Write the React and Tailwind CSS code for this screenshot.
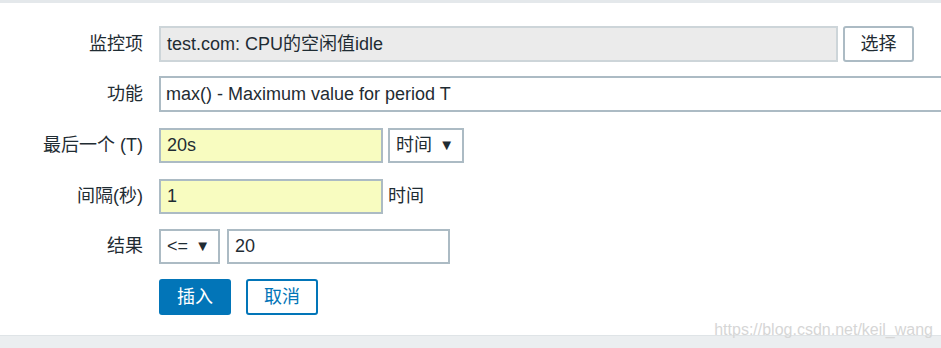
function Row({ label, className = "", children }) {
  return (
    <div className={`flex items-center ${className}`}>
      <div className="w-[143px] shrink-0 text-right text-[18px] text-[#1f2c33]">{label}</div>
      <div className="ml-[16px] flex items-center flex-1 min-w-0">{children}</div>
    </div>
  );
}

function Select({ value, className = "" }) {
  return (
    <div
      className={`flex items-center justify-between border-2 border-[#acbbc4] bg-white pl-[6px] pr-[8px] text-[18px] text-[#1f2c33] ${className}`}
    >
      <span>{value}</span>
      <span className="text-[15px]">▼</span>
    </div>
  );
}

export default function App() {
  return (
    <div
      className="relative w-[941px] h-[348px] overflow-hidden bg-white text-[#1f2c33]"
      style={{ fontFamily: '"Liberation Sans", Arial, "Noto Sans CJK SC", sans-serif' }}
    >
      <div className="h-[3px] bg-[#e4e8eb]" />

      <div className="pt-[23px]">
        <Row label="监控项">
          <div className="flex items-center w-[679px] h-[36px] border-2 border-[#cdd5d9] bg-[#ebebeb] px-[6px] text-[18px]">
            test.com: CPU的空闲值idle
          </div>
          <button className="ml-[5px] w-[71px] h-[36px] rounded-[3px] border-2 border-[#acbbc4] bg-white text-[18px]">
            选择
          </button>
        </Row>

        <Row label="功能" className="mt-[14px]">
          <div className="flex items-center w-[820px] shrink-0 h-[36px] border-2 border-[#acbbc4] bg-white px-[5px] text-[18px]">
            max() - Maximum value for period T
          </div>
        </Row>

        <Row label="最后一个 (T)" className="mt-[16px]">
          <div className="flex items-center w-[224px] h-[35px] border-2 border-[#acbbc4] bg-[#f8fcc0] px-[6px] text-[18px]">
            20s
          </div>
          <Select value="时间" className="ml-[5px] w-[76px] h-[35px]" />
        </Row>

        <Row label="间隔(秒)" className="mt-[16px]">
          <div className="flex items-center w-[224px] h-[35px] border-2 border-[#acbbc4] bg-[#f8fcc0] px-[6px] text-[18px]">
            1
          </div>
          <span className="ml-[5px] text-[18px]">时间</span>
        </Row>

        <Row label="结果" className="mt-[15px]">
          <Select value="<=" className="w-[61px] h-[35px]" />
          <div className="ml-[7px] flex items-center w-[223px] h-[35px] border-2 border-[#acbbc4] bg-white px-[6px] text-[18px]">
            20
          </div>
        </Row>

        <div className="mt-[15px] ml-[159px] flex gap-[15px]">
          <button className="w-[72px] h-[36px] rounded-[3px] bg-[#0275b8] text-white text-[18px]">插入</button>
          <button className="w-[72px] h-[36px] rounded-[3px] border-2 border-[#0275b8] bg-white text-[#0275b8] text-[18px]">
            取消
          </button>
        </div>
      </div>

      <div className="absolute left-0 right-0 bottom-0 h-[13px] border-t border-[#dfe4e7] bg-[#ebeef0]" />
      <div className="absolute right-[8px] bottom-[10px] text-[16px] text-[#d6d6d6] leading-none">
        https://blog.csdn.net/keil_wang
      </div>
    </div>
  );
}
